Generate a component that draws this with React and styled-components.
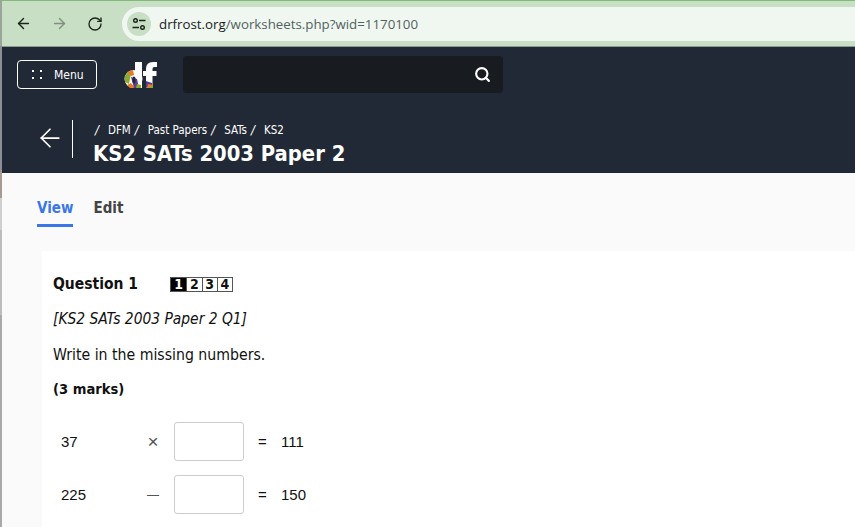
import React from 'react';
import styled, { createGlobalStyle } from 'styled-components';
import { ArrowLeft, ArrowRight, RotateCw, Search } from 'lucide-react';

const GlobalStyle = createGlobalStyle`
    html, body {
        margin: 0;
        padding: 0;
        background: #fafafa;
        overflow: hidden;
    }
`;

const Page = styled.div`
    width: 855px;
    height: 527px;
    box-sizing: border-box;
    border-left: 2px solid;
    border-image: linear-gradient(#9aa59a 0 47px, #8b8f96 47px 170px, #a89a90 170px 198px, #cfcfcf 198px 230px, #bcbcbc 230px 315px, #a9a9a9 315px) 1;
    overflow: hidden;
    font-family: "DejaVu Sans Condensed", "DejaVu Sans", sans-serif;
    color: #111;
`;

// browser chrome
const Toolbar = styled.div`
    height: 47px;
    box-sizing: border-box;
    background: #c8dfc5;
    border-top: 1px solid #7fbc78;
    border-bottom: 1px solid #8c9a8c;
    display: flex;
    align-items: center;
    padding-left: 13px;
`;
const NavButton = styled.div`
    width: 36px;
    display: flex;
    color: ${props => props.$muted ? '#828f81' : '#1c241c'};
`;
const Omnibox = styled.div`
    flex: 1;
    height: 34px;
    margin-left: -1px;
    background: #f0f7f0;
    border-radius: 17px 0 0 17px;
    display: flex;
    align-items: center;
    padding-left: 5px;
`;
const SiteIcon = styled.div`
    width: 24px;
    height: 24px;
    border-radius: 50%;
    background: #c8dfc5;
    display: flex;
    align-items: center;
    justify-content: center;
`;
const Url = styled.div`
    margin-left: 8px;
    font-family: "Open Sans", sans-serif;
    font-size: 13.3px;
    color: #50625f;
    b {
        font-weight: 400;
        color: #18211c;
    }
`;

// dark site header
const SiteHeader = styled.div`
    height: 126px;
    background: #222936;
    color: #fff;
`;
const TopRow = styled.div`
    display: flex;
    align-items: center;
    padding: 9px 0 0 15px;
`;
const MenuButton = styled.div`
    width: 80px;
    height: 29px;
    box-sizing: border-box;
    border: 1px solid #fff;
    border-radius: 4px;
    display: flex;
    align-items: center;
    padding-left: 14px;
    gap: 12px;
    font-size: 12px;
    font-weight: 500;
`;
const Dots = styled.div`
    display: grid;
    grid-template-columns: 2px 2px;
    gap: 5px 6px;
    i {
        width: 2px;
        height: 2px;
        background: #fff;
    }
`;
const Logo = styled.svg`
    margin-left: 27px;
    width: 34px;
    height: 26px;
`;
const SearchBox = styled.div`
    margin-left: 25px;
    width: 320px;
    height: 37px;
    background: #181c21;
    border-radius: 4px;
    display: flex;
    align-items: center;
    justify-content: flex-end;
    padding-right: 12px;
    box-sizing: border-box;
`;
const TitleRow = styled.div`
    display: flex;
    align-items: flex-start;
    margin: 27px 0 0 33px;
`;
const BackLink = styled.div`
    width: 38px;
    height: 38px;
    box-sizing: border-box;
    border-right: 1px solid #fff;
    padding-bottom: 2px;
    display: flex;
    align-items: center;
`;
const TitleBlock = styled.div`
    margin-left: 20px;
`;
const Crumbs = styled.div`
    display: flex;
    font-size: 11.5px;
    line-height: 14px;
    margin: 3px 0 0 2px;
`;
const Slash = styled.span`
    margin: 0 9px 0 4px;
    font-size: 13px;
    font-style: italic;
    &:first-child {
        margin-left: 0;
    }
`;
const Title = styled.h1`
    margin: 3px 0 0;
    font-size: 21.8px;
    line-height: 28px;
    font-weight: 700;
`;

// tabs
const Tabs = styled.div`
    height: 78px;
    box-sizing: border-box;
    padding: 22px 0 0 35px;
    display: flex;
    gap: 20px;
    background: #fafafa;
`;
const Tab = styled.div`
    height: 32px;
    box-sizing: border-box;
    font-size: 15px;
    font-weight: 700;
    line-height: 26px;
    color: ${props => props.$active ? '#3b76e8' : '#444'};
    border-bottom: 3px solid ${props => props.$active ? '#3b76e8' : 'transparent'};
`;

// question card
const Card = styled.div`
    margin-left: 40px;
    height: 276px;
    background: #fff;
    padding: 23px 0 0 11px;
`;
const QuestionHead = styled.div`
    display: flex;
    align-items: center;
    height: 20px;
    font-size: 15.5px;
    font-weight: 700;
`;
const Steps = styled.div`
    display: flex;
    margin-left: 32px;
    border: 1px solid #555;
`;
const Step = styled.div`
    width: 15.25px;
    height: 13px;
    box-sizing: border-box;
    font-size: 14px;
    line-height: 13px;
    text-align: center;
    font-weight: 700;
    background: ${props => props.$current ? '#000' : '#fff'};
    color: ${props => props.$current ? '#fff' : '#111'};
    & + & {
        border-left: 1px solid #555;
    }
`;
const Source = styled.p`
    margin: 15px 0 0;
    font-size: 15.4px;
    line-height: 20px;
    font-style: italic;
`;
const Prompt = styled.p`
    margin: 16px 0 0;
    font-size: 15.7px;
    line-height: 20px;
`;
const Marks = styled.p`
    margin: 14px 0 0;
    font-size: 14.6px;
    line-height: 20px;
    font-weight: 700;
`;
const Sums = styled.div`
    margin-top: 23px;
    display: grid;
    grid-template-columns: 86px 27px 70px 37px auto;
    grid-auto-rows: 39px;
    row-gap: 14px;
    align-items: center;
    justify-content: start;
    font-family: "Liberation Sans", sans-serif;
    font-size: 15px;
    padding-left: 8px;
`;
const Operator = styled.div`
    width: 12px;
    text-align: center;
    color: #555;
    font-size: ${props => props.$size}px;
    font-weight: 300;
`;
const AnswerBox = styled.div`
    height: 39px;
    box-sizing: border-box;
    border: 1px solid #ccc;
    border-radius: 3px;
`;
const Equals = styled.div`
    padding-left: 14px;
`;

const sums = [
    { left: '37', op: '×', opSize: 19, right: '111' },
    { left: '225', op: '—', opSize: 12, right: '150' },
];

export default function App() {
    return (
        <Page>
            <GlobalStyle />
            <Toolbar>
                <NavButton><ArrowLeft size={17} strokeWidth={2} /></NavButton>
                <NavButton $muted><ArrowRight size={17} strokeWidth={2} /></NavButton>
                <NavButton><RotateCw size={16} strokeWidth={2} /></NavButton>
                <Omnibox>
                    <SiteIcon>
                        <svg width="14" height="14" viewBox="0 0 14 14" fill="none" stroke="#1c241c" strokeWidth="1.4">
                            <circle cx="3.5" cy="3.5" r="1.8" />
                            <path d="M7 3.5h6.5M0.5 10.5h6.5" />
                            <circle cx="10.5" cy="10.5" r="1.8" />
                        </svg>
                    </SiteIcon>
                    <Url><b>drfrost.org</b>/worksheets.php?wid=1170100</Url>
                </Omnibox>
            </Toolbar>
            <SiteHeader>
                <TopRow>
                    <MenuButton>
                        <Dots><i /><i /><i /><i /></Dots>
                        Menu
                    </MenuButton>
                    <Logo viewBox="0 0 34 26">
                        {/* d */}
                        <path d="M11 0h7v26h-7z" fill="#fff" />
                        <circle cx="9.5" cy="17" r="9" fill="#fff" />
                        <path d="M1 14l3-4 3 2-2 10-4-2z" fill="#8cab2e" />
                        <path d="M3 10l6-2 1 5-3 1z" fill="#e87a24" />
                        <path d="M3 23l4-2 4 5H6z" fill="#e87a24" />
                        <path d="M7 15l6 2 2 9H10z" fill="#5e3b8e" />
                        <path d="M13 22l4 1v3h-5z" fill="#8cab2e" />
                        <ellipse cx="10" cy="18" rx="1.6" ry="3.5" fill="#222936" />
                        {/* f */}
                        <path d="M22 26V14h-3V9h3V7q0-7 7-7h4v5h-3q-1.500 0-1.500 2v2h4v5h-4v11z" fill="#fff" />
                        <path d="M22 19l6 2v2l-6 3z" fill="#5e3b8e" />
                        <path d="M24 22l5 1v3h-6z" fill="#e87a24" />
                        <path d="M26 24h3v2h-4z" fill="#8cab2e" />
                    </Logo>
                    <SearchBox><Search size={17} strokeWidth={3} color="#fff" /></SearchBox>
                </TopRow>
                <TitleRow>
                    <BackLink><ArrowLeft size={30} strokeWidth={1.4} color="#fff" /></BackLink>
                    <TitleBlock>
                        <Crumbs>
                            <Slash>/</Slash>DFM<Slash>/</Slash>Past Papers<Slash>/</Slash>SATs<Slash>/</Slash>KS2
                        </Crumbs>
                        <Title>KS2 SATs 2003 Paper 2</Title>
                    </TitleBlock>
                </TitleRow>
            </SiteHeader>
            <Tabs>
                <Tab $active>View</Tab>
                <Tab>Edit</Tab>
            </Tabs>
            <Card>
                <QuestionHead>
                    Question 1
                    <Steps>
                        {[1, 2, 3, 4].map(n => <Step key={n} $current={n === 1}>{n}</Step>)}
                    </Steps>
                </QuestionHead>
                <Source>[KS2 SATs 2003 Paper 2 Q1]</Source>
                <Prompt>Write in the missing numbers.</Prompt>
                <Marks>(3 marks)</Marks>
                <Sums>
                    {sums.map(({ left, op, opSize, right }) => (
                        <React.Fragment key={left}>
                            <div>{left}</div>
                            <Operator $size={opSize}>{op}</Operator>
                            <AnswerBox />
                            <Equals>=</Equals>
                            <div>{right}</div>
                        </React.Fragment>
                    ))}
                </Sums>
            </Card>
        </Page>
    );
}
